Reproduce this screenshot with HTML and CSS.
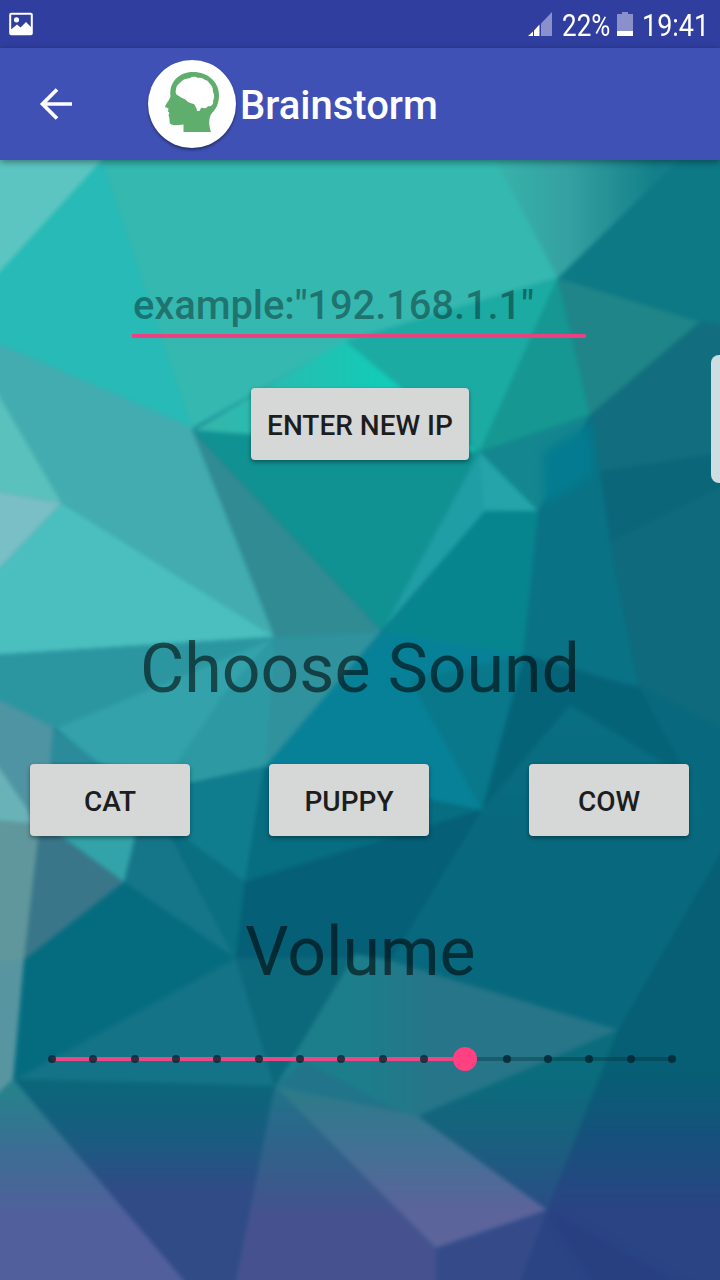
FILE: index.html
```html
<!DOCTYPE html>
<html lang="en">
<head>
<meta charset="utf-8">
<title>Brainstorm</title>
<link rel="stylesheet" href="styles.css">
</head>
<body>
<div class="screen">
  <header class="status">
    <svg class="status-photo" width="24" height="24" viewBox="0 0 24 24"><rect x="1.2" y="1.700" width="21.600" height="20.600" rx="1" fill="none" stroke="#fff" stroke-width="2"/><circle cx="7.500" cy="7.800" r="2.600" fill="#fff"/><path d="M2 17.500l6-5 3.500 3 5.500-5.500 5 5v7H2z" fill="#fff"/></svg>
    <svg class="status-signal" width="24" height="24" viewBox="0 0 24 24"><path d="M13 11.500L24 0v24H13z" fill="#8a90cc"/><path d="M0 24l5-4.500V24zM6 18.500l5.500-6V24H6z" fill="#fff"/></svg>
    <span class="status-text battery-text">22%</span>
    <svg class="status-battery" width="16" height="24" viewBox="0 0 16 24"><path d="M0 2h5V0h6v2h5v17H0z" fill="#8a90cc"/><path d="M0 19h16v5H0z" fill="#fff"/></svg>
    <span class="status-text clock">19:41</span>
  </header>
  <nav class="appbar">
    <svg class="back" width="34" height="32" viewBox="0 0 34 32"><path d="M33 16H4M18 1.500L3.500 16l14.500 14.500" fill="none" stroke="#fff" stroke-width="3.700"/></svg>
    <div class="logo">
      <svg width="88" height="88" viewBox="0 0 88 88"><path fill="#5fae6e" d="M35.500 72V64.500C30 65 24 66 22 63.500C21 61 22 59 21 57L20.500 54.500L21.500 53L20 51.500L20.500 48.500L17 47C18 43 22 40 22.500 36C21 22 31 12 45 12C60 12 71 22 71 35C71 44 68 49 64 53C60 58 61 66 63 72Z"/><path fill="#fff" d="M28 30C28 25 32 23 34 21C37 18 40 19 42 18C45 16 48 17 50 18C53 17 56 19 57 20C60 20 61 23 62 24C65 27 65 30 65 32C67 35 66 39 65 41C66 45 62 47 60 46C58 50 54 47 53 48L51.500 51H49C49 48 47 46 46 44C43 43 40 43 38 40C35 38 33 38 31 36C28 35 27 32 28 30Z"/></svg>
    </div>
    <h1 class="title">Brainstorm</h1>
  </nav>
  <main class="content">
    <svg class="wallpaper" width="720" height="1120" viewBox="0 160 720 1120">
      <defs>
        <filter id="soft" x="0" y="0" width="1" height="1" color-interpolation-filters="sRGB"><feGaussianBlur stdDeviation="2"/></filter>
        <filter id="haze" x="-.3" y="-.3" width="1.6" height="1.6" color-interpolation-filters="sRGB"><feGaussianBlur stdDeviation="4"/></filter>
        <linearGradient id="topRight" gradientUnits="userSpaceOnUse" x1="500" y1="0" x2="655" y2="0"><stop offset="0" stop-color="#36b2aa"/><stop offset=".45" stop-color="#35a0a1"/><stop offset="1" stop-color="#137f88"/></linearGradient>
        <linearGradient id="mint" gradientUnits="userSpaceOnUse" x1="200" y1="0" x2="380" y2="0"><stop offset="0" stop-color="#35b5ac"/><stop offset=".8" stop-color="#1bc5b4"/><stop offset="1" stop-color="#13cbb8"/></linearGradient>
        <linearGradient id="facet" gradientUnits="userSpaceOnUse" x1="0" y1="720" x2="0" y2="830"><stop offset="0" stop-color="#0a6e82"/><stop offset="1" stop-color="#08697e"/></linearGradient>
        <linearGradient id="lowFacet" gradientUnits="userSpaceOnUse" x1="360" y1="0" x2="430" y2="0"><stop offset="0" stop-color="#1c7e8b"/><stop offset="1" stop-color="#267588"/></linearGradient>
        <linearGradient id="g1" gradientUnits="userSpaceOnUse" x1="0" y1="1085" x2="0" y2="1190"><stop offset="0" stop-color="#0b667a"/><stop offset=".5" stop-color="#195c80"/><stop offset="1" stop-color="#304b86"/></linearGradient>
        <linearGradient id="g2" gradientUnits="userSpaceOnUse" x1="0" y1="1090" x2="0" y2="1215"><stop offset="0" stop-color="#27818c"/><stop offset=".5" stop-color="#3d6d94"/><stop offset="1" stop-color="#51609c"/></linearGradient>
        <linearGradient id="g3" gradientUnits="userSpaceOnUse" x1="0" y1="1090" x2="0" y2="1215"><stop offset="0" stop-color="#21728a"/><stop offset=".5" stop-color="#31618a"/><stop offset="1" stop-color="#45528f"/></linearGradient>
        <linearGradient id="g4" gradientUnits="userSpaceOnUse" x1="0" y1="1090" x2="0" y2="1210"><stop offset="0" stop-color="#2c7b89"/><stop offset=".5" stop-color="#437195"/><stop offset="1" stop-color="#5b649b"/></linearGradient>
        <linearGradient id="g5" gradientUnits="userSpaceOnUse" x1="0" y1="1080" x2="0" y2="1200"><stop offset="0" stop-color="#0a6c7c"/><stop offset=".5" stop-color="#1a607e"/><stop offset="1" stop-color="#285086"/></linearGradient>
        <linearGradient id="g6" gradientUnits="userSpaceOnUse" x1="0" y1="1070" x2="0" y2="1210"><stop offset="0" stop-color="#065f74"/><stop offset=".45" stop-color="#15527b"/><stop offset="1" stop-color="#2a4484"/></linearGradient>
      </defs>
      <g filter="url(#soft)">
        <rect x="-5" y="150" width="730" height="1140" fill="#08697e"/>
        <path fill="#5cc5c1" d="M-5 150H112L-5 278z"/>
        <path fill="#27bab7" d="M102 160L192 428L-5 343V277z"/>
        <path fill="#42acb0" d="M-5 342L192 427L275 637L62 503L-5 388z"/>
        <path fill="#5bc1bc" d="M-5 388L62 503L-5 491z"/>
        <path fill="#7abfc5" d="M-5 491L62 503L-5 573z"/>
        <path fill="#4bbfbf" d="M62 503L275 637L-5 655V573z"/>
        <path fill="#34b8b0" d="M98 150H495L558 278L345 342L192 429z"/>
        <path fill="url(#topRight)" d="M490 150H690L558 278z"/>
        <path fill="#0d7985" d="M690 150H725V335L700 322L558 278z"/>
        <path fill="#1baba3" d="M558 278L345 342L480 452z"/>
        <path fill="url(#mint)" d="M345 341L480 453L192 431z"/>
        <path fill="#109192" d="M192 430L482 452L382 631z"/>
        <path fill="#308b93" d="M192 430L382 631L275 638z"/>
        <path fill="#169792" d="M558 278L480 452L590 415z"/>
        <path fill="#1f8588" d="M558 278L590 415L700 322z"/>
        <path fill="#126e7e" d="M700 322L725 325V455L598 482L590 415z"/>
        <path fill="#0b667a" d="M595 472L725 452V488L610 545z"/>
        <path fill="#0e6a7c" d="M607 543L725 485V730L635 683z"/>
        <path fill="#14868f" d="M480 452L590 415L540 511z"/>
        <path fill="#1f9fa5" d="M480 452L540 512L485 511L382 631z"/>
        <path fill="#25a5aa" d="M480 454L538 511L484 509z"/>
        <path fill="#07858f" d="M485 511H539L524 655L382 633z"/>
        <path fill="#0a7285" d="M538 511L592 416L612 555L638 686L522 665z"/>
        <path fill="#047b90" filter="url(#haze)" d="M543 452L590 424L593 474L545 506z"/>
        <path fill="#2b96a0" d="M-5 655L275 637L55 728L-5 700z"/>
        <path fill="#33a2aa" d="M55 728L275 637L220 700L180 775L100 765z"/>
        <path fill="#2d9aa3" d="M275 637L220 700L175 765V787L268 766z"/>
        <path fill="#2f929d" d="M275 637L382 631L265 767z"/>
        <path fill="#078198" d="M382 632L524 655L482 810L265 767z"/>
        <path fill="#09788b" d="M410 680L524 655L482 810z"/>
        <path fill="#056378" d="M524 655L640 688L690 780L570 705L482 810z"/>
        <path fill="url(#facet)" d="M570 705L690 780L720 840H482V810z"/>
        <path fill="#107d8f" d="M180 788L264 767L245 882L180 835z"/>
        <path fill="#096f81" d="M168 825L245 882L236 960z"/>
        <path fill="#167689" d="M135 825H165L236 960L124 882z"/>
        <path fill="#076d81" d="M264 767L482 810L245 882z"/>
        <path fill="#055f76" d="M245 882L482 810L388 965L236 958z"/>
        <path fill="#4f94a3" d="M-5 698L55 728L48 830L-5 780z"/>
        <path fill="#2b8b9a" d="M53 728L102 765H50z"/>
        <path fill="#69b3b8" d="M-5 762L38 825H-5z"/>
        <path fill="#60979c" d="M-5 820L40 824L24 962H-5z"/>
        <path fill="#397689" d="M40 824H62L124 882L24 960z"/>
        <path fill="#32a4a9" d="M45 824H138L124 882z"/>
        <path fill="#5796a1" d="M-5 960L24 960L13 1080L-5 1100z"/>
        <path fill="#056c80" d="M24 960L124 882L236 958L14 1080z"/>
        <path fill="#147386" d="M236 958L14 1080L275 1087z"/>
        <path fill="#0c687b" d="M236 958L355 958L275 1087z"/>
        <path fill="url(#lowFacet)" d="M355 954L388 960L618 1030L418 1117L275 1087z"/>
        <path fill="#24708a" fill-opacity=".7" d="M275 1087L305 1062L410 1116z"/>
        <path fill="url(#g1)" d="M14 1079L275 1086L234 1290H190z"/>
        <path fill="url(#g2)" d="M-5 1096L13 1079L192 1290H-5z"/>
        <path fill="url(#g3)" d="M275 1086L436 1248V1290H234z"/>
        <path fill="url(#g4)" d="M275 1086L418 1116L547 1210L436 1248z"/>
        <path fill="url(#g5)" d="M418 1116L618 1030L547 1210z"/>
        <path fill="url(#g6)" d="M618 1030L725 845V1290H515L547 1210z"/>
        <path fill="#354b89" d="M436 1248L547 1210L517 1290H436z"/>
        <path fill="#283f80" filter="url(#haze)" d="M547 1210L690 1290H600z"/>
      </g>
    </svg>
    <div class="field">example:"192.168.1.1"</div>
    <button class="btn btn-ip">ENTER NEW IP</button>
    <h2 class="heading heading-sound">Choose Sound</h2>
    <div class="sounds">
      <button class="btn">CAT</button>
      <button class="btn">PUPPY</button>
      <button class="btn">COW</button>
    </div>
    <h2 class="heading heading-volume">Volume</h2>
    <div class="slider">
      <i class="tick"></i><i class="tick"></i><i class="tick"></i><i class="tick"></i><i class="tick"></i><i class="tick"></i><i class="tick"></i><i class="tick"></i><i class="tick"></i><i class="tick"></i><i class="tick thumb"></i><i class="tick"></i><i class="tick"></i><i class="tick"></i><i class="tick"></i><i class="tick"></i>
    </div>
    <div class="edge-handle"></div>
  </main>
</div>
</body>
</html>
```
FILE: styles.css
```css
* { box-sizing: border-box; }
body { margin: 0; font-family: Roboto, "Liberation Sans", sans-serif; }
.screen { width: 720px; height: 1280px; display: flex; flex-direction: column; overflow: hidden; }
.status { height: 48px; flex: none; display: flex; align-items: center; padding: 0 13px 0 9px; background: #303f9f; color: #fff; }
.status-signal { margin-left: auto; margin-right: 10px; }
.status-text { display: block; font-size: 31px; line-height: 48px; white-space: nowrap; transform-origin: 0 50%; padding-top: 3px; }
.battery-text { width: 48px; transform: scaleX(.84); }
.status-battery { margin: 0 9px 0 7px; }
.clock { width: 65px; transform: scaleX(.87); }
.appbar { height: 112px; flex: none; display: flex; align-items: center; padding-left: 39px; background: #3f51b5; color: #fff; position: relative; z-index: 1; box-shadow: 0 2px 7px rgba(0,0,0,.4); }
.logo { width: 88px; height: 88px; margin-left: 75px; border-radius: 50%; background: #fff; box-shadow: 0 2px 3px rgba(0,0,0,.4); }
.logo svg { display: block; }
.title { margin: 4px 0 0 4px; font-size: 40px; font-weight: 500; line-height: 48px; }
.content { position: relative; flex: 1; display: flex; flex-direction: column; align-items: center; padding-top: 118px; }
.wallpaper { position: absolute; inset: 0; z-index: -1; }
.field { width: 454px; height: 60px; margin-right: 2px; padding-left: 1px; border-bottom: 4px solid #ec407f; border-radius: 1px; font-size: 40px; font-weight: 500; line-height: 56px; letter-spacing: -.12px; color: rgba(0,0,0,.38); white-space: nowrap; }
.btn { width: 160px; height: 72px; padding: 3px 0 0; border: 0; border-radius: 4px; background: #d6d7d7; color: #1c1d1d; font: 500 28px Roboto, sans-serif; box-shadow: 0 2px 4px rgba(0,0,0,.4); }
.btn-ip { width: 218px; margin-top: 50px; }
.heading { margin: 0; font-size: 68px; font-weight: 400; line-height: 80px; color: rgba(0,0,0,.56); white-space: nowrap; }
.heading-sound { margin-top: 169px; }
.sounds { display: grid; grid-template-columns: 160px 160px 160px; column-gap: 79px; width: 659px; margin: 55px 1px 0 0; }
.sounds .btn:last-child { margin-left: 21px; }
.heading-volume { margin-top: 76px; padding-left: 1px; }
.slider { width: 628px; height: 24px; margin: 55px 0 0 4px; display: flex; align-items: center; justify-content: space-between; background: linear-gradient(90deg, #ec4785 0 418px, rgba(0,45,55,.35) 418px) 4px 10px / 620px 4px no-repeat; }
.tick { width: 8px; height: 8px; border-radius: 50%; background: rgba(5,36,49,.8); }
.thumb { width: 24px; height: 24px; margin: 0 -8px; background: #ff4081; }
.edge-handle { position: absolute; right: 0; top: 195px; width: 9px; height: 128px; border-radius: 8px 0 0 8px; background: #ccdee2; }
```
